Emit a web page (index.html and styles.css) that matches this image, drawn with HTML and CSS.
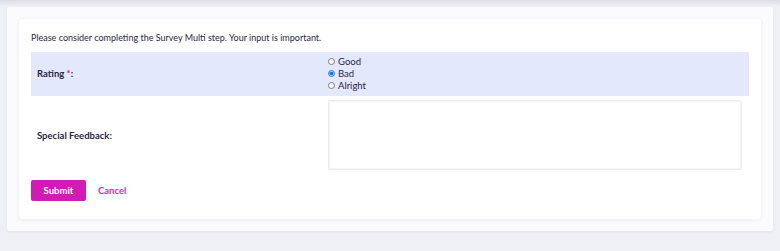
FILE: index.html
```html
<!DOCTYPE html>
<html>
<head>
  <title>Survey Multi step</title>
  <link rel="stylesheet" href="styles.css">
</head>
<body>
  <div class="panel">
    <form class="card">
      <p class="intro">Please consider completing the Survey Multi step. Your input is important.</p>

      <div class="row row-shaded">
        <label class="row-label">Rating <span class="req">*</span>:</label>
        <div class="options">
          <label class="option"><input type="radio" name="rating" value="good"> Good</label>
          <label class="option"><input type="radio" name="rating" value="bad" checked> Bad</label>
          <label class="option"><input type="radio" name="rating" value="alright"> Alright</label>
        </div>
      </div>

      <div class="row">
        <label class="row-label" for="feedback">Special Feedback:</label>
        <textarea id="feedback" name="feedback"></textarea>
      </div>

      <div class="actions">
        <button type="button" class="btn-submit">Submit</button>
        <a href="#" class="link-cancel">Cancel</a>
      </div>
    </form>
  </div>
</body>
</html>
```

FILE: styles.css
```css
body {
  margin: 0;
  padding: 7px;
  font-family: "Lato", "Inter", sans-serif;
  font-size: 9.5px;
  color: #2d2840;
  background: linear-gradient(#dcdde6, #eef0f5 6px) #eef0f5;
  height: 251px;
  box-sizing: border-box;
}

/* outer container */
.panel {
  background-color: #fbfbfd;
  border-radius: 3px;
  padding: 12px;
  height: 224px;
  box-sizing: border-box;
  box-shadow: 0 1px 3px rgba(40, 40, 80, 0.06);
}

.card {
  background-color: #fff;
  border-radius: 4px;
  box-shadow: 0 1px 4px rgba(40, 40, 80, 0.08);
  padding: 12px 12px 18px 12px;
  height: 200px;
  box-sizing: border-box;
}

.intro {
  margin: 0 0 8px 0;
  font-size: 9px;
  line-height: 12px;
  padding-top: 1px;
}

.row {
  display: grid;
  grid-template-columns: 297px 1fr;
  align-items: center;
}
.row-shaded {
  background-color: #e3e8fd;
  padding: 3px 0 5px 0;
}
.row-label {
  padding-left: 6px;
  font-weight: 700;
  color: #2b2547;
}
.req {
  color: #e0243a;
}

.options {
  display: flex;
  flex-direction: column;
}
.option {
  display: flex;
  align-items: center;
  height: 12px;
  color: #2b2547;
}
.option input {
  width: 7px;
  height: 7px;
  margin: 0 3px 0 0;
  accent-color: #1a73e8;
}

textarea {
  margin: 4px 7px 4px 0;
  height: 70px;
  box-sizing: border-box;
  border: 1px solid #ebebf0;
  border-radius: 2px;
  box-shadow: inset 0 0 0 1px #f5f5f8;
  resize: none;
  font-family: inherit;
}

.actions {
  display: flex;
  align-items: center;
  margin-top: 6px;
}
.btn-submit {
  width: 55px;
  height: 21px;
  background-color: #d21ab4;
  color: #fff;
  border: none;
  border-radius: 2px;
  font-family: inherit;
  font-size: 9.5px;
  font-weight: 700;
  cursor: pointer;
}
.link-cancel {
  margin-left: 12px;
  color: #d42db6;
  font-weight: 700;
  text-decoration: none;
}
```
